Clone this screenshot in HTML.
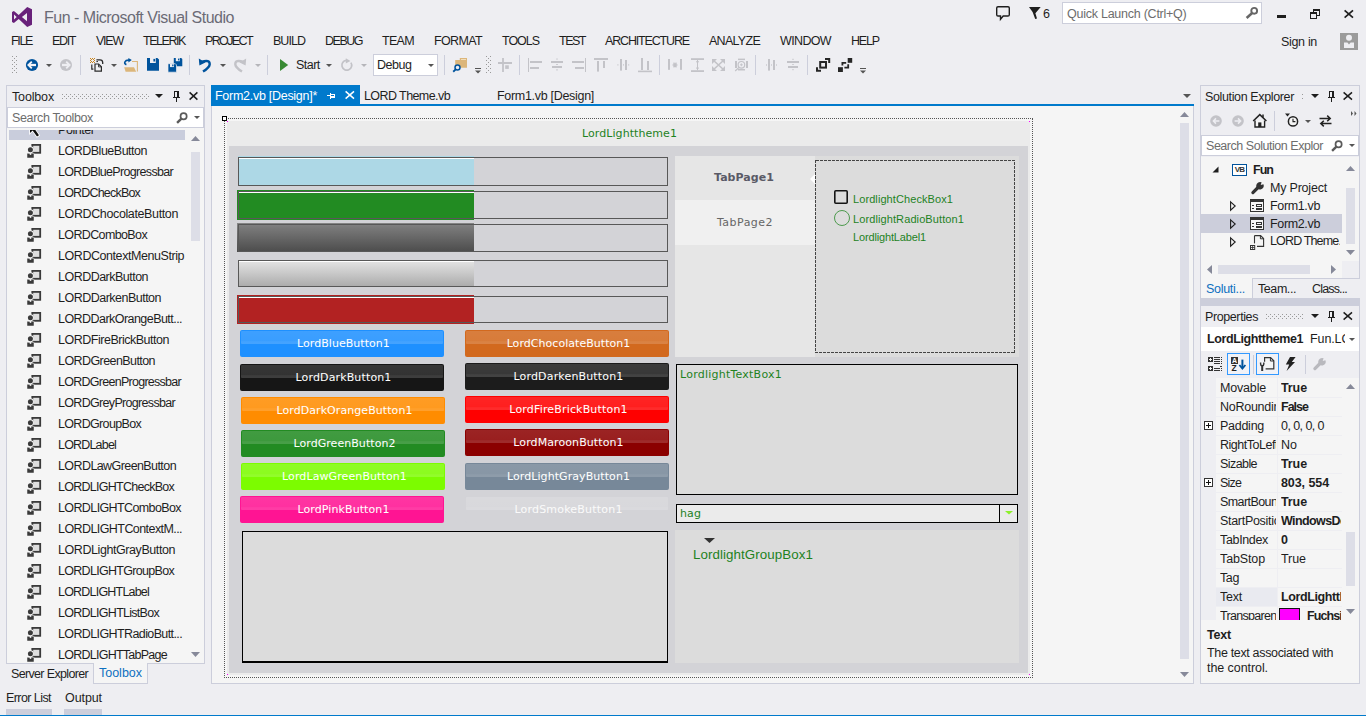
<!DOCTYPE html>
<html><head><meta charset="utf-8"><title>Fun - Microsoft Visual Studio</title>
<style>
*{box-sizing:border-box;margin:0;padding:0}
html,body{width:1366px;height:716px;overflow:hidden;background:#EEEEF2}
body{font-family:"Liberation Sans",sans-serif;font-size:12px;color:#1E1E1E;position:relative}
.a{position:absolute}
.t{position:absolute;white-space:nowrap;line-height:16px;height:16px}
.pn{position:absolute;border:1px solid #CCCEDB;background:#F5F5F5}
svg{position:absolute;overflow:visible}
.vd{font-family:"DejaVu Sans","Liberation Sans",sans-serif}
.btn{position:absolute;width:204px;height:27px;border-radius:2px;color:#fff;font-family:"DejaVu Sans",sans-serif;font-size:11px;text-align:center;line-height:27px;white-space:nowrap;letter-spacing:.1px;padding-left:3px}
.btn i{position:absolute;left:1px;right:1px;top:1px;height:13px;background:linear-gradient(rgba(255,255,255,.14),rgba(255,255,255,.12) 80%,rgba(255,255,255,.17) 81%);border-radius:1px}
</style></head><body>

<!-- title -->
<svg style="left:12px;top:7px" width="20" height="20" viewBox="0 0 20 20"><path fill="#68217A" fill-rule="evenodd" d="M15.2 0 L20 2.3 V17.7 L15.2 20 L6.7 12 L1.9 16 L0 15 V5 L1.9 4 L6.7 8 Z M15 6 V14.2 L9.9 10 Z M2 7.6 V12.5 L4.7 10 Z"/></svg>
<div class="t" style="left:44px;top:10px;font-size:16px;letter-spacing:-0.491px;color:#6b6b76;">Fun - Microsoft Visual Studio</div>
<svg style="left:995px;top:5px" width="16" height="16" viewBox="0 0 16 16"><path fill="none" stroke="#1e1e1e" stroke-width="1.4" d="M3 1.8 H13 Q14.3 1.8 14.3 3.1 V9.7 Q14.3 11 13 11 H8.2 L5.5 14.3 V11 H3 Q1.7 11 1.7 9.7 V3.1 Q1.7 1.8 3 1.8 Z"/></svg>
<svg style="left:1029px;top:7px" width="12" height="12" viewBox="0 0 12 12"><path fill="#1e1e1e" d="M0 0 H11.7 L6.4 6.2 L8 11.6 L6.2 12 L3.6 5 Z"/></svg>
<div class="t" style="left:1043px;top:6px;font-size:12.5px;letter-spacing:-0.452px;">6</div>
<div class="a" style="left:1062px;top:2px;width:200px;height:22px;background:#fff;border:1px solid #CCCEDB"></div>
<div class="t" style="left:1067px;top:6px;font-size:12.5px;letter-spacing:-0.247px;color:#6d6d6d;">Quick Launch (Ctrl+Q)</div>
<svg style="left:1244.6px;top:6px" width="14" height="14" viewBox="0 0 14 14"><circle cx="9.2" cy="4.8" r="2.9" fill="none" stroke="#666" stroke-width="1.9"/><path d="M6.9 7.2 L1.6 12" stroke="#666" stroke-width="2.5"/></svg>
<div class="a" style="left:1277px;top:14.7px;width:9px;height:3.4px;background:#1e1e1e"></div>
<svg style="left:1310px;top:9px" width="10" height="10" shape-rendering="crispEdges"><path fill="#1e1e1e" d="M3 0 H10 V7 H7 V6 H9 V2 H4 V3 H3 Z M0 3 H7 V10 H0 Z"/><path fill="#EEEEF2" d="M1 5 H6 V9 H1 Z"/></svg>
<svg style="left:1344.2px;top:10px" width="9.6" height="8" viewBox="0 0 9.6 8"><path d="M0.6 0.4 L9 7.6 M9 0.4 L0.6 7.6" stroke="#1e1e1e" stroke-width="1.7"/></svg>
<!-- menu -->
<div class="t" style="left:11px;top:33px;font-size:12.5px;letter-spacing:-1.349px;">FILE</div>
<div class="t" style="left:52px;top:33px;font-size:12.5px;letter-spacing:-1.368px;">EDIT</div>
<div class="t" style="left:96px;top:33px;font-size:12.5px;letter-spacing:-1.236px;">VIEW</div>
<div class="t" style="left:143px;top:33px;font-size:12.5px;letter-spacing:-1.443px;">TELERIK</div>
<div class="t" style="left:205px;top:33px;font-size:12.5px;letter-spacing:-1.620px;">PROJECT</div>
<div class="t" style="left:273px;top:33px;font-size:12.5px;letter-spacing:-0.963px;">BUILD</div>
<div class="t" style="left:325px;top:33px;font-size:12.5px;letter-spacing:-1.490px;">DEBUG</div>
<div class="t" style="left:382px;top:33px;font-size:12.5px;letter-spacing:-0.681px;">TEAM</div>
<div class="t" style="left:434px;top:33px;font-size:12.5px;letter-spacing:-0.641px;">FORMAT</div>
<div class="t" style="left:502px;top:33px;font-size:12.5px;letter-spacing:-1.029px;">TOOLS</div>
<div class="t" style="left:559px;top:33px;font-size:12.5px;letter-spacing:-1.487px;">TEST</div>
<div class="t" style="left:605px;top:33px;font-size:12.5px;letter-spacing:-1.160px;">ARCHITECTURE</div>
<div class="t" style="left:709px;top:33px;font-size:12.5px;letter-spacing:-0.720px;">ANALYZE</div>
<div class="t" style="left:780px;top:33px;font-size:12.5px;letter-spacing:-0.641px;">WINDOW</div>
<div class="t" style="left:851px;top:33px;font-size:12.5px;letter-spacing:-1.164px;">HELP</div>
<div class="t" style="left:1281px;top:34px;font-size:12.5px;letter-spacing:-0.317px;">Sign in</div>
<div class="a" style="left:1340px;top:33px;width:18px;height:17px;background:#9B9B9B"></div>
<svg style="left:1340px;top:33px" width="18" height="17" viewBox="0 0 18 17"><circle cx="9" cy="4.8" r="3" fill="#EEEEF2"/><path d="M4 9.4 H7.4 L9 11.6 L10.6 9.4 H14 V15 H4 Z" fill="#EEEEF2"/></svg>
<!-- toolbar -->
<svg style="left:12px;top:56px" width="5" height="17" shape-rendering="crispEdges"><defs><pattern id="g1" width="4" height="4" patternUnits="userSpaceOnUse"><rect x="0" y="0" width="1" height="1" fill="#999"/><rect x="2" y="2" width="1" height="1" fill="#999"/></pattern></defs><rect width="5" height="17" fill="url(#g1)"/></svg>
<svg style="left:26px;top:59px" width="12" height="12" viewBox="0 0 12 12"><circle cx="6" cy="6" r="6.1" fill="#00539C"/><path d="M10 6 H4" stroke="#F4F4F8" stroke-width="2.3" fill="none"/><path d="M5.8 2.6 L2.4 6 L5.8 9.4" stroke="#F4F4F8" stroke-width="1.9" fill="none"/></svg>
<svg style="left:46px;top:64px" width="6" height="3" viewBox="0 0 6 3"><path d="M0 0 H6 L3.0 3 Z" fill="#555"/></svg>
<svg style="left:60px;top:59px" width="12" height="12" viewBox="0 0 12 12"><circle cx="6" cy="6" r="6" fill="#C3C3C8"/><path d="M2 6 H8" stroke="#EEEEF2" stroke-width="2.3" fill="none"/><path d="M6.2 2.6 L9.6 6 L6.2 9.4" stroke="#EEEEF2" stroke-width="1.9" fill="none"/></svg>
<div class="a" style="left:80px;top:55px;width:1px;height:20px;background:#CCCEDB"></div>
<svg style="left:90px;top:58px" width="5" height="5" shape-rendering="crispEdges" fill="#C8841E"><rect x="0" y="0" width="1" height="1"/><rect x="2" y="0" width="1" height="1"/><rect x="4" y="0" width="1" height="1"/><rect x="1" y="1" width="1" height="1"/><rect x="3" y="1" width="1" height="1"/><rect x="0" y="2" width="1" height="1"/><rect x="4" y="2" width="1" height="1"/><rect x="1" y="3" width="1" height="1"/><rect x="3" y="3" width="1" height="1"/><rect x="0" y="4" width="1" height="1"/><rect x="2" y="4" width="1" height="1"/><rect x="4" y="4" width="1" height="1"/></svg>
<svg style="left:89px;top:58px" width="15" height="15" viewBox="0 0 15 15"><path d="M7.4 1.9 H11 Q13.7 1.9 13.7 4.6 V6" fill="none" stroke="#2b2b2b" stroke-width="1.3"/><path d="M7.4 3.6 H9" stroke="#2b2b2b" stroke-width="1"/><path d="M2.8 6.4 V11.2 H4.4" fill="none" stroke="#2b2b2b" stroke-width="1.2"/><path d="M6 6 H9.6 L12.4 8.8 V13.1 H6 Z" fill="#F0F0F2" stroke="#2b2b2b" stroke-width="1.2"/><path d="M9.5 6.2 V8.9 H12.2" fill="none" stroke="#2b2b2b" stroke-width="0.9"/></svg>
<svg style="left:111px;top:64px" width="6" height="3" viewBox="0 0 6 3"><path d="M0 0 H6 L3.0 3 Z" fill="#555"/></svg>
<svg style="left:123px;top:58px" width="16" height="15" viewBox="0 0 16 15"><path d="M9 3.5 H14.4 V13.6" fill="none" stroke="#DCB67A" stroke-width="1.1"/><path d="M1.2 9.2 H11 L13.2 13.7 H2.6 Z" fill="#DCB67A"/><path d="M3.4 6.6 Q1.2 5.8 1.9 4 Q2.8 2 6 2.1" fill="none" stroke="#00539C" stroke-width="1.7"/><path d="M5.4 0 L8.8 2.1 L5.4 4.4 Z" fill="#00539C"/></svg>
<svg style="left:147px;top:58.4px" width="12" height="12.7" viewBox="0 0 12 12.7"><path d="M0 0 H10.4 L12 1.6 V12.7 H0 Z" fill="#00539C"/><rect x="3" y="0" width="5.8" height="5" fill="#EEEEF2"/><rect x="6.4" y="0.9" width="1.8" height="2.6" fill="#00539C"/></svg>
<svg style="left:168px;top:57.8px" width="14.4" height="14.2" viewBox="0 0 14.4 14.2"><path d="M5.8 0 H13.2 L14.3 1.1 V8.2 H5.8 Z" fill="#00539C"/><rect x="7.8" y="0" width="4" height="3.2" fill="#EEEEF2"/><rect x="10" y="0.6" width="1.3" height="1.8" fill="#00539C"/><path d="M0 5.7 H7.3 L8.5 6.9 V14.2 H0 Z" fill="#00539C" stroke="#EEEEF2" stroke-width="0.7"/><rect x="2" y="5.9" width="4" height="3.2" fill="#EEEEF2"/><rect x="4.2" y="6.5" width="1.3" height="1.8" fill="#00539C"/></svg>
<div class="a" style="left:189px;top:55px;width:1px;height:20px;background:#CCCEDB"></div>
<svg style="left:198px;top:58px" width="14" height="15" viewBox="0 0 14 15"><path d="M3.5 4 Q11.9 1.2 11.7 6.4 Q11.5 9.6 5 13.6" fill="none" stroke="#00539C" stroke-width="2.4"/><path d="M0.8 0.4 L1.4 7.4 L7.4 4.4 Z" fill="#00539C"/></svg>
<svg style="left:220px;top:64px" width="6" height="3" viewBox="0 0 6 3"><path d="M0 0 H6 L3.0 3 Z" fill="#555"/></svg>
<svg style="left:232.6px;top:58px" width="14" height="15" viewBox="0 0 14 15"><path d="M10.5 4 Q2.1 1.2 2.3 6.4 Q2.5 9.6 9 13.6" fill="none" stroke="#C3C3C8" stroke-width="2.4"/><path d="M13.2 0.4 L12.6 7.4 L6.6 4.4 Z" fill="#C3C3C8"/></svg>
<svg style="left:255px;top:64px" width="6" height="3" viewBox="0 0 6 3"><path d="M0 0 H6 L3.0 3 Z" fill="#B5B5BA"/></svg>
<div class="a" style="left:267px;top:55px;width:1px;height:20px;background:#CCCEDB"></div>
<svg style="left:280px;top:59px" width="8.2" height="12" viewBox="0 0 8.2 12"><path d="M0 0 L8.2 6 L0 12 Z" fill="#388A34"/></svg>
<div class="t" style="left:296px;top:57px;font-size:12.5px;letter-spacing:-0.520px;">Start</div>
<svg style="left:326px;top:64px" width="6" height="3" viewBox="0 0 6 3"><path d="M0 0 H6 L3.0 3 Z" fill="#555"/></svg>
<svg style="left:340px;top:58px" width="14" height="14" viewBox="0 0 14 14"><path d="M10.9 4.6 A4.9 4.9 0 1 1 6.2 2.4" fill="none" stroke="#C3C3C8" stroke-width="1.7"/><path d="M5.8 0.2 L10.4 2.9 L5.8 5.4 Z" fill="#C3C3C8"/></svg>
<svg style="left:361px;top:64px" width="6" height="3" viewBox="0 0 6 3"><path d="M0 0 H6 L3.0 3 Z" fill="#B5B5BA"/></svg>
<div class="a" style="left:373px;top:54px;width:65px;height:22px;background:#fff;border:1px solid #CCCEDB"></div>
<div class="t" style="left:377px;top:57px;font-size:12.5px;letter-spacing:-0.467px;">Debug</div>
<svg style="left:428px;top:64px" width="6" height="3" viewBox="0 0 6 3"><path d="M0 0 H6 L3.0 3 Z" fill="#555"/></svg>
<div class="a" style="left:444px;top:55px;width:1px;height:20px;background:#CCCEDB"></div>
<svg style="left:452px;top:58px" width="17" height="15" viewBox="0 0 17 15"><path d="M3.2 2 H7.8 V0 H15 V9.8 H3.2 Z" fill="#DCB67A"/><rect x="9" y="1" width="5" height="0.9" fill="#F3E3C4"/><circle cx="5.5" cy="9.6" r="2.5" fill="#EEEEF2" stroke="#00539C" stroke-width="1.5"/><path d="M3.7 11.4 L1.2 13.7" stroke="#00539C" stroke-width="1.9"/></svg>
<svg style="left:475px;top:68px" width="6" height="6" viewBox="0 0 6 6"><path d="M0 0 H6 V1 H0Z M0 2.5 H6 L3 5.5 Z" fill="#555"/></svg>
<svg style="left:486px;top:56px" width="5" height="17" shape-rendering="crispEdges"><defs><pattern id="g2" width="4" height="4" patternUnits="userSpaceOnUse"><rect x="0" y="0" width="1" height="1" fill="#999"/><rect x="2" y="2" width="1" height="1" fill="#999"/></pattern></defs><rect width="5" height="17" fill="url(#g2)"/></svg>
<svg style="left:498px;top:58px" width="14" height="14" viewBox="0 0 14 14"><path d="M0 5 H14 M5 0 V14" stroke="#C3C3C8" stroke-width="1.8"/><rect x="7.2" y="7.3" width="3.6" height="3.6" fill="#C3C3C8"/></svg>
<div class="a" style="left:519px;top:55px;width:1px;height:20px;background:#CCCEDB"></div>
<svg style="left:527px;top:58px" width="16" height="15" fill="#C3C3C8"><rect x="1" y="0" width="1" height="14"/><rect x="3" y="3" width="12" height="2"/><rect x="3" y="9" width="9" height="2"/></svg>
<svg style="left:551px;top:58px" width="16" height="15" fill="#C3C3C8"><rect x="0" y="3" width="12" height="2"/><rect x="1" y="8" width="10" height="2"/><rect x="5.2" y="0.6" width="1.6" height="0.9"/><rect x="5.2" y="6" width="1.6" height="1"/><rect x="5.2" y="11.4" width="1.6" height="1"/></svg>
<svg style="left:572px;top:58px" width="16" height="15" fill="#C3C3C8"><rect x="13" y="0" width="1" height="14"/><rect x="0" y="3" width="12" height="2"/><rect x="3" y="9" width="9" height="2"/></svg>
<svg style="left:593px;top:58px" width="16" height="15" fill="#C3C3C8"><rect x="1" y="0" width="14" height="2"/><rect x="4" y="3" width="2" height="10.6"/><rect x="10" y="3" width="2" height="7"/></svg>
<svg style="left:616px;top:58px" width="16" height="15" fill="#C3C3C8"><rect x="4" y="1" width="2" height="11.6"/><rect x="9" y="2" width="2" height="10"/><rect x="1.4" y="6.3" width="1" height="1.2"/><rect x="7" y="6.3" width="1" height="1.2"/><rect x="12.2" y="6.3" width="1" height="1.2"/></svg>
<svg style="left:637px;top:58px" width="16" height="15" fill="#C3C3C8"><rect x="1" y="12.6" width="14" height="1.6"/><rect x="4" y="0" width="2" height="12"/><rect x="10" y="3" width="2" height="9"/></svg>
<div class="a" style="left:659px;top:55px;width:1px;height:20px;background:#CCCEDB"></div>
<svg style="left:667px;top:58px" width="16" height="15" fill="#C3C3C8"><rect x="1" y="1" width="2" height="10.8"/><rect x="13" y="1" width="2" height="10.8"/><path d="M5.6 7 H10.4 M6.6 4.6 L9.4 9.4 M9.4 4.6 L6.6 9.4" stroke="#C3C3C8" stroke-width="1.3" fill="none"/></svg>
<svg style="left:690px;top:58px" width="16" height="15" fill="#C3C3C8"><rect x="1" y="0.2" width="13" height="1.8"/><rect x="1" y="12.2" width="13" height="1.8"/><rect x="7" y="2" width="1" height="10.2"/><rect x="6.3" y="3" width="2.4" height="1.4"/><rect x="6.3" y="9.4" width="2.4" height="1.4"/></svg>
<svg style="left:711px;top:58px" width="15" height="14" viewBox="0 0 15 14"><path d="M2 2 L13 12 M13 2 L2 12" stroke="#C3C3C8" stroke-width="1.6"/><path d="M1 6 V1 H6 Z M14 6 V1 H9 Z M1 8 V13 H6 Z M14 8 V13 H9 Z" fill="#C3C3C8"/></svg>
<svg style="left:734px;top:58px" width="16" height="15" fill="#C3C3C8"><rect x="4" y="0.6" width="7" height="1.5"/><rect x="4" y="11" width="7" height="1.5"/><rect x="1" y="3" width="2" height="7"/><rect x="12" y="3" width="2" height="7"/><circle cx="7.4" cy="6.8" r="3.3" fill="#EEEEF2" stroke="#C3C3C8" stroke-width="1.2"/><path d="M6 6.8 H8.8 M7.4 5.4 V8.2" stroke="#C3C3C8" stroke-width="0.9"/><path d="M5 9.4 L1.2 13" stroke="#C3C3C8" stroke-width="1.3"/></svg>
<div class="a" style="left:755px;top:55px;width:1px;height:20px;background:#CCCEDB"></div>
<svg style="left:765px;top:58px" width="16" height="15" fill="#C3C3C8"><rect x="3" y="1" width="2" height="11.6"/><rect x="8" y="2" width="2" height="10"/><rect x="1" y="6.4" width="1" height="1.2"/><rect x="6" y="6.4" width="1" height="1.2"/><rect x="11" y="6.4" width="1" height="1.2"/></svg>
<svg style="left:786px;top:58px" width="16" height="15" fill="#C3C3C8"><rect x="1" y="3" width="12" height="2"/><rect x="2" y="8" width="10" height="2"/><rect x="6.3" y="0.8" width="1.4" height="1"/><rect x="6.3" y="6" width="1.4" height="1"/><rect x="6.3" y="11.2" width="1.4" height="1"/></svg>
<div class="a" style="left:807px;top:55px;width:1px;height:20px;background:#CCCEDB"></div>
<svg style="left:816px;top:58px" width="15" height="14" viewBox="0 0 15 14"><rect x="4.2" y="4" width="5.8" height="5.6" fill="#EEEEF2" stroke="#262626" stroke-width="2"/><path d="M9 1 H13.2 V5" fill="none" stroke="#262626" stroke-width="2"/><path d="M1 9.2 V12.8 H5" fill="none" stroke="#262626" stroke-width="2"/></svg>
<svg style="left:838px;top:58px" width="15" height="14" viewBox="0 0 15 14"><rect x="9.7" y="0" width="4.5" height="4.8" fill="#262626"/><rect x="0" y="9.2" width="4.9" height="4.8" fill="#262626"/><path d="M4.4 7.6 V4.8 H8.2" fill="none" stroke="#262626" stroke-width="1.8"/><path d="M10.2 6.2 V9.6 H6.4" fill="none" stroke="#262626" stroke-width="1.8"/></svg>
<svg style="left:860px;top:68px" width="6" height="6" viewBox="0 0 6 6"><path d="M0 0 H6 V1 H0Z M0 2.5 H6 L3 5.5 Z" fill="#555"/></svg>
<!-- toolbox -->
<div class="pn" style="left:6px;top:85px;width:199px;height:579px;background:#EEEEF2"></div><div class="a" style="left:7px;top:128px;width:197px;height:535px;background:#F5F5F5"></div>
<div class="t" style="left:12px;top:89px;font-size:12.5px;letter-spacing:-0.155px;">Toolbox</div>
<svg style="left:62px;top:94px" width="87" height="5" shape-rendering="crispEdges"><defs><pattern id="g3" width="4" height="4" patternUnits="userSpaceOnUse"><rect x="0" y="0" width="1" height="1" fill="#999"/><rect x="2" y="2" width="1" height="1" fill="#999"/></pattern></defs><rect width="87" height="5" fill="url(#g3)"/></svg>
<svg style="left:155px;top:94px" width="8" height="4" viewBox="0 0 8 4"><path d="M0 0 H8 L4.0 4 Z" fill="#1E1E1E"/></svg>
<svg style="left:173px;top:91px" width="7" height="11" shape-rendering="crispEdges"><path fill="#1E1E1E" d="M1 0 H6 V6 H7 V7 H4 V11 H3 V7 H0 V6 H1 Z M2 1 V6 H4 V1 Z"/></svg>
<svg style="left:188.5px;top:92px" width="9" height="8" viewBox="0 0 9 8"><path d="M0.6 0.4 L8.4 7.6 M8.4 0.4 L0.6 7.6" stroke="#1E1E1E" stroke-width="1.5"/></svg>
<div class="a" style="left:7px;top:107px;width:197px;height:21px;background:#fff;border:1px solid #CCCEDB"></div>
<div class="t" style="left:12px;top:110px;font-size:12.5px;letter-spacing:-0.353px;color:#6d6d6d;">Search Toolbox</div>
<svg style="left:176px;top:112px" width="12" height="12" viewBox="0 0 12 12"><circle cx="7.6" cy="4.3" r="3.1" fill="none" stroke="#5a5a5a" stroke-width="1.7"/><path d="M5.4 6.6 L1.1 10.9" stroke="#5a5a5a" stroke-width="2.4"/></svg>
<svg style="left:193.8px;top:116px" width="6" height="3" viewBox="0 0 6 3"><path d="M0 0 H6 L3.0 3 Z" fill="#555"/></svg>
<div class="a" style="left:9px;top:130px;width:176px;height:10px;background:#C9CDDC;overflow:hidden"><div class="t" style="left:49px;top:-8px;font-size:12.5px;letter-spacing:-0.444px">Pointer</div><svg style="left:0;top:0" width="40" height="10" viewBox="0 0 40 10"><path d="M21 -5 V3 L23.6 0.4 L28 6.6 L30 5.2 L25.6 -1 L29 -5 Z" fill="#111" stroke="#fff" stroke-width="1.6" paint-order="stroke"/></svg></div>
<svg style="left:27px;top:144px" width="15" height="14" viewBox="0 0 15 14"><rect x="5.3" y="0.9" width="7.9" height="7.9" fill="#DEDEDE" stroke="#3a3a3a" stroke-width="1.8"/><circle cx="3.4" cy="5.7" r="3.4" fill="#F5F5F5"/><circle cx="3.4" cy="5.7" r="2.5" fill="#3a3a3a"/><path d="M0 14 V9.3 H2.2 L3.5 11 L4.8 9.3 H7 V14 Z" fill="#3a3a3a" stroke="#F5F5F5" stroke-width="0.5"/></svg>
<div class="t" style="left:58px;top:143px;font-size:12.5px;letter-spacing:-0.492px;">LORDBlueButton</div>
<svg style="left:27px;top:165px" width="15" height="14" viewBox="0 0 15 14"><rect x="5.3" y="0.9" width="7.9" height="7.9" fill="#DEDEDE" stroke="#3a3a3a" stroke-width="1.8"/><circle cx="3.4" cy="5.7" r="3.4" fill="#F5F5F5"/><circle cx="3.4" cy="5.7" r="2.5" fill="#3a3a3a"/><path d="M0 14 V9.3 H2.2 L3.5 11 L4.8 9.3 H7 V14 Z" fill="#3a3a3a" stroke="#F5F5F5" stroke-width="0.5"/></svg>
<div class="t" style="left:58px;top:164px;font-size:12.5px;letter-spacing:-0.675px;">LORDBlueProgressbar</div>
<svg style="left:27px;top:186px" width="15" height="14" viewBox="0 0 15 14"><rect x="5.3" y="0.9" width="7.9" height="7.9" fill="#DEDEDE" stroke="#3a3a3a" stroke-width="1.8"/><circle cx="3.4" cy="5.7" r="3.4" fill="#F5F5F5"/><circle cx="3.4" cy="5.7" r="2.5" fill="#3a3a3a"/><path d="M0 14 V9.3 H2.2 L3.5 11 L4.8 9.3 H7 V14 Z" fill="#3a3a3a" stroke="#F5F5F5" stroke-width="0.5"/></svg>
<div class="t" style="left:58px;top:185px;font-size:12.5px;letter-spacing:-0.808px;">LORDCheckBox</div>
<svg style="left:27px;top:207px" width="15" height="14" viewBox="0 0 15 14"><rect x="5.3" y="0.9" width="7.9" height="7.9" fill="#DEDEDE" stroke="#3a3a3a" stroke-width="1.8"/><circle cx="3.4" cy="5.7" r="3.4" fill="#F5F5F5"/><circle cx="3.4" cy="5.7" r="2.5" fill="#3a3a3a"/><path d="M0 14 V9.3 H2.2 L3.5 11 L4.8 9.3 H7 V14 Z" fill="#3a3a3a" stroke="#F5F5F5" stroke-width="0.5"/></svg>
<div class="t" style="left:58px;top:206px;font-size:12.5px;letter-spacing:-0.377px;">LORDChocolateButton</div>
<svg style="left:27px;top:228px" width="15" height="14" viewBox="0 0 15 14"><rect x="5.3" y="0.9" width="7.9" height="7.9" fill="#DEDEDE" stroke="#3a3a3a" stroke-width="1.8"/><circle cx="3.4" cy="5.7" r="3.4" fill="#F5F5F5"/><circle cx="3.4" cy="5.7" r="2.5" fill="#3a3a3a"/><path d="M0 14 V9.3 H2.2 L3.5 11 L4.8 9.3 H7 V14 Z" fill="#3a3a3a" stroke="#F5F5F5" stroke-width="0.5"/></svg>
<div class="t" style="left:58px;top:227px;font-size:12.5px;letter-spacing:-0.630px;">LORDComboBox</div>
<svg style="left:27px;top:249px" width="15" height="14" viewBox="0 0 15 14"><rect x="5.3" y="0.9" width="7.9" height="7.9" fill="#DEDEDE" stroke="#3a3a3a" stroke-width="1.8"/><circle cx="3.4" cy="5.7" r="3.4" fill="#F5F5F5"/><circle cx="3.4" cy="5.7" r="2.5" fill="#3a3a3a"/><path d="M0 14 V9.3 H2.2 L3.5 11 L4.8 9.3 H7 V14 Z" fill="#3a3a3a" stroke="#F5F5F5" stroke-width="0.5"/></svg>
<div class="t" style="left:58px;top:248px;font-size:12.5px;letter-spacing:-0.439px;">LORDContextMenuStrip</div>
<svg style="left:27px;top:270px" width="15" height="14" viewBox="0 0 15 14"><rect x="5.3" y="0.9" width="7.9" height="7.9" fill="#DEDEDE" stroke="#3a3a3a" stroke-width="1.8"/><circle cx="3.4" cy="5.7" r="3.4" fill="#F5F5F5"/><circle cx="3.4" cy="5.7" r="2.5" fill="#3a3a3a"/><path d="M0 14 V9.3 H2.2 L3.5 11 L4.8 9.3 H7 V14 Z" fill="#3a3a3a" stroke="#F5F5F5" stroke-width="0.5"/></svg>
<div class="t" style="left:58px;top:269px;font-size:12.5px;letter-spacing:-0.519px;">LORDDarkButton</div>
<svg style="left:27px;top:291px" width="15" height="14" viewBox="0 0 15 14"><rect x="5.3" y="0.9" width="7.9" height="7.9" fill="#DEDEDE" stroke="#3a3a3a" stroke-width="1.8"/><circle cx="3.4" cy="5.7" r="3.4" fill="#F5F5F5"/><circle cx="3.4" cy="5.7" r="2.5" fill="#3a3a3a"/><path d="M0 14 V9.3 H2.2 L3.5 11 L4.8 9.3 H7 V14 Z" fill="#3a3a3a" stroke="#F5F5F5" stroke-width="0.5"/></svg>
<div class="t" style="left:58px;top:290px;font-size:12.5px;letter-spacing:-0.510px;">LORDDarkenButton</div>
<svg style="left:27px;top:312px" width="15" height="14" viewBox="0 0 15 14"><rect x="5.3" y="0.9" width="7.9" height="7.9" fill="#DEDEDE" stroke="#3a3a3a" stroke-width="1.8"/><circle cx="3.4" cy="5.7" r="3.4" fill="#F5F5F5"/><circle cx="3.4" cy="5.7" r="2.5" fill="#3a3a3a"/><path d="M0 14 V9.3 H2.2 L3.5 11 L4.8 9.3 H7 V14 Z" fill="#3a3a3a" stroke="#F5F5F5" stroke-width="0.5"/></svg>
<div class="t" style="left:58px;top:311px;font-size:12.5px;letter-spacing:-0.546px;">LORDDarkOrangeButt...</div>
<svg style="left:27px;top:333px" width="15" height="14" viewBox="0 0 15 14"><rect x="5.3" y="0.9" width="7.9" height="7.9" fill="#DEDEDE" stroke="#3a3a3a" stroke-width="1.8"/><circle cx="3.4" cy="5.7" r="3.4" fill="#F5F5F5"/><circle cx="3.4" cy="5.7" r="2.5" fill="#3a3a3a"/><path d="M0 14 V9.3 H2.2 L3.5 11 L4.8 9.3 H7 V14 Z" fill="#3a3a3a" stroke="#F5F5F5" stroke-width="0.5"/></svg>
<div class="t" style="left:58px;top:332px;font-size:12.5px;letter-spacing:-0.483px;">LORDFireBrickButton</div>
<svg style="left:27px;top:354px" width="15" height="14" viewBox="0 0 15 14"><rect x="5.3" y="0.9" width="7.9" height="7.9" fill="#DEDEDE" stroke="#3a3a3a" stroke-width="1.8"/><circle cx="3.4" cy="5.7" r="3.4" fill="#F5F5F5"/><circle cx="3.4" cy="5.7" r="2.5" fill="#3a3a3a"/><path d="M0 14 V9.3 H2.2 L3.5 11 L4.8 9.3 H7 V14 Z" fill="#3a3a3a" stroke="#F5F5F5" stroke-width="0.5"/></svg>
<div class="t" style="left:58px;top:353px;font-size:12.5px;letter-spacing:-0.574px;">LORDGreenButton</div>
<svg style="left:27px;top:375px" width="15" height="14" viewBox="0 0 15 14"><rect x="5.3" y="0.9" width="7.9" height="7.9" fill="#DEDEDE" stroke="#3a3a3a" stroke-width="1.8"/><circle cx="3.4" cy="5.7" r="3.4" fill="#F5F5F5"/><circle cx="3.4" cy="5.7" r="2.5" fill="#3a3a3a"/><path d="M0 14 V9.3 H2.2 L3.5 11 L4.8 9.3 H7 V14 Z" fill="#3a3a3a" stroke="#F5F5F5" stroke-width="0.5"/></svg>
<div class="t" style="left:58px;top:374px;font-size:12.5px;letter-spacing:-0.728px;">LORDGreenProgressbar</div>
<svg style="left:27px;top:396px" width="15" height="14" viewBox="0 0 15 14"><rect x="5.3" y="0.9" width="7.9" height="7.9" fill="#DEDEDE" stroke="#3a3a3a" stroke-width="1.8"/><circle cx="3.4" cy="5.7" r="3.4" fill="#F5F5F5"/><circle cx="3.4" cy="5.7" r="2.5" fill="#3a3a3a"/><path d="M0 14 V9.3 H2.2 L3.5 11 L4.8 9.3 H7 V14 Z" fill="#3a3a3a" stroke="#F5F5F5" stroke-width="0.5"/></svg>
<div class="t" style="left:58px;top:395px;font-size:12.5px;letter-spacing:-0.679px;">LORDGreyProgressbar</div>
<svg style="left:27px;top:417px" width="15" height="14" viewBox="0 0 15 14"><rect x="5.3" y="0.9" width="7.9" height="7.9" fill="#DEDEDE" stroke="#3a3a3a" stroke-width="1.8"/><circle cx="3.4" cy="5.7" r="3.4" fill="#F5F5F5"/><circle cx="3.4" cy="5.7" r="2.5" fill="#3a3a3a"/><path d="M0 14 V9.3 H2.2 L3.5 11 L4.8 9.3 H7 V14 Z" fill="#3a3a3a" stroke="#F5F5F5" stroke-width="0.5"/></svg>
<div class="t" style="left:58px;top:416px;font-size:12.5px;letter-spacing:-0.667px;">LORDGroupBox</div>
<svg style="left:27px;top:438px" width="15" height="14" viewBox="0 0 15 14"><rect x="5.3" y="0.9" width="7.9" height="7.9" fill="#DEDEDE" stroke="#3a3a3a" stroke-width="1.8"/><circle cx="3.4" cy="5.7" r="3.4" fill="#F5F5F5"/><circle cx="3.4" cy="5.7" r="2.5" fill="#3a3a3a"/><path d="M0 14 V9.3 H2.2 L3.5 11 L4.8 9.3 H7 V14 Z" fill="#3a3a3a" stroke="#F5F5F5" stroke-width="0.5"/></svg>
<div class="t" style="left:58px;top:437px;font-size:12.5px;letter-spacing:-0.813px;">LORDLabel</div>
<svg style="left:27px;top:459px" width="15" height="14" viewBox="0 0 15 14"><rect x="5.3" y="0.9" width="7.9" height="7.9" fill="#DEDEDE" stroke="#3a3a3a" stroke-width="1.8"/><circle cx="3.4" cy="5.7" r="3.4" fill="#F5F5F5"/><circle cx="3.4" cy="5.7" r="2.5" fill="#3a3a3a"/><path d="M0 14 V9.3 H2.2 L3.5 11 L4.8 9.3 H7 V14 Z" fill="#3a3a3a" stroke="#F5F5F5" stroke-width="0.5"/></svg>
<div class="t" style="left:58px;top:458px;font-size:12.5px;letter-spacing:-0.586px;">LORDLawGreenButton</div>
<svg style="left:27px;top:480px" width="15" height="14" viewBox="0 0 15 14"><rect x="5.3" y="0.9" width="7.9" height="7.9" fill="#DEDEDE" stroke="#3a3a3a" stroke-width="1.8"/><circle cx="3.4" cy="5.7" r="3.4" fill="#F5F5F5"/><circle cx="3.4" cy="5.7" r="2.5" fill="#3a3a3a"/><path d="M0 14 V9.3 H2.2 L3.5 11 L4.8 9.3 H7 V14 Z" fill="#3a3a3a" stroke="#F5F5F5" stroke-width="0.5"/></svg>
<div class="t" style="left:58px;top:479px;font-size:12.5px;letter-spacing:-0.736px;">LORDLIGHTCheckBox</div>
<svg style="left:27px;top:501px" width="15" height="14" viewBox="0 0 15 14"><rect x="5.3" y="0.9" width="7.9" height="7.9" fill="#DEDEDE" stroke="#3a3a3a" stroke-width="1.8"/><circle cx="3.4" cy="5.7" r="3.4" fill="#F5F5F5"/><circle cx="3.4" cy="5.7" r="2.5" fill="#3a3a3a"/><path d="M0 14 V9.3 H2.2 L3.5 11 L4.8 9.3 H7 V14 Z" fill="#3a3a3a" stroke="#F5F5F5" stroke-width="0.5"/></svg>
<div class="t" style="left:58px;top:500px;font-size:12.5px;letter-spacing:-0.610px;">LORDLIGHTComboBox</div>
<svg style="left:27px;top:522px" width="15" height="14" viewBox="0 0 15 14"><rect x="5.3" y="0.9" width="7.9" height="7.9" fill="#DEDEDE" stroke="#3a3a3a" stroke-width="1.8"/><circle cx="3.4" cy="5.7" r="3.4" fill="#F5F5F5"/><circle cx="3.4" cy="5.7" r="2.5" fill="#3a3a3a"/><path d="M0 14 V9.3 H2.2 L3.5 11 L4.8 9.3 H7 V14 Z" fill="#3a3a3a" stroke="#F5F5F5" stroke-width="0.5"/></svg>
<div class="t" style="left:58px;top:521px;font-size:12.5px;letter-spacing:-0.572px;">LORDLIGHTContextM...</div>
<svg style="left:27px;top:543px" width="15" height="14" viewBox="0 0 15 14"><rect x="5.3" y="0.9" width="7.9" height="7.9" fill="#DEDEDE" stroke="#3a3a3a" stroke-width="1.8"/><circle cx="3.4" cy="5.7" r="3.4" fill="#F5F5F5"/><circle cx="3.4" cy="5.7" r="2.5" fill="#3a3a3a"/><path d="M0 14 V9.3 H2.2 L3.5 11 L4.8 9.3 H7 V14 Z" fill="#3a3a3a" stroke="#F5F5F5" stroke-width="0.5"/></svg>
<div class="t" style="left:58px;top:542px;font-size:12.5px;letter-spacing:-0.424px;">LORDLightGrayButton</div>
<svg style="left:27px;top:564px" width="15" height="14" viewBox="0 0 15 14"><rect x="5.3" y="0.9" width="7.9" height="7.9" fill="#DEDEDE" stroke="#3a3a3a" stroke-width="1.8"/><circle cx="3.4" cy="5.7" r="3.4" fill="#F5F5F5"/><circle cx="3.4" cy="5.7" r="2.5" fill="#3a3a3a"/><path d="M0 14 V9.3 H2.2 L3.5 11 L4.8 9.3 H7 V14 Z" fill="#3a3a3a" stroke="#F5F5F5" stroke-width="0.5"/></svg>
<div class="t" style="left:58px;top:563px;font-size:12.5px;letter-spacing:-0.695px;">LORDLIGHTGroupBox</div>
<svg style="left:27px;top:585px" width="15" height="14" viewBox="0 0 15 14"><rect x="5.3" y="0.9" width="7.9" height="7.9" fill="#DEDEDE" stroke="#3a3a3a" stroke-width="1.8"/><circle cx="3.4" cy="5.7" r="3.4" fill="#F5F5F5"/><circle cx="3.4" cy="5.7" r="2.5" fill="#3a3a3a"/><path d="M0 14 V9.3 H2.2 L3.5 11 L4.8 9.3 H7 V14 Z" fill="#3a3a3a" stroke="#F5F5F5" stroke-width="0.5"/></svg>
<div class="t" style="left:58px;top:584px;font-size:12.5px;letter-spacing:-0.795px;">LORDLIGHTLabel</div>
<svg style="left:27px;top:606px" width="15" height="14" viewBox="0 0 15 14"><rect x="5.3" y="0.9" width="7.9" height="7.9" fill="#DEDEDE" stroke="#3a3a3a" stroke-width="1.8"/><circle cx="3.4" cy="5.7" r="3.4" fill="#F5F5F5"/><circle cx="3.4" cy="5.7" r="2.5" fill="#3a3a3a"/><path d="M0 14 V9.3 H2.2 L3.5 11 L4.8 9.3 H7 V14 Z" fill="#3a3a3a" stroke="#F5F5F5" stroke-width="0.5"/></svg>
<div class="t" style="left:58px;top:605px;font-size:12.5px;letter-spacing:-0.721px;">LORDLIGHTListBox</div>
<svg style="left:27px;top:627px" width="15" height="14" viewBox="0 0 15 14"><rect x="5.3" y="0.9" width="7.9" height="7.9" fill="#DEDEDE" stroke="#3a3a3a" stroke-width="1.8"/><circle cx="3.4" cy="5.7" r="3.4" fill="#F5F5F5"/><circle cx="3.4" cy="5.7" r="2.5" fill="#3a3a3a"/><path d="M0 14 V9.3 H2.2 L3.5 11 L4.8 9.3 H7 V14 Z" fill="#3a3a3a" stroke="#F5F5F5" stroke-width="0.5"/></svg>
<div class="t" style="left:58px;top:626px;font-size:12.5px;letter-spacing:-0.612px;">LORDLIGHTRadioButt...</div>
<svg style="left:27px;top:648px" width="15" height="14" viewBox="0 0 15 14"><rect x="5.3" y="0.9" width="7.9" height="7.9" fill="#DEDEDE" stroke="#3a3a3a" stroke-width="1.8"/><circle cx="3.4" cy="5.7" r="3.4" fill="#F5F5F5"/><circle cx="3.4" cy="5.7" r="2.5" fill="#3a3a3a"/><path d="M0 14 V9.3 H2.2 L3.5 11 L4.8 9.3 H7 V14 Z" fill="#3a3a3a" stroke="#F5F5F5" stroke-width="0.5"/></svg>
<div class="t" style="left:58px;top:647px;font-size:12.5px;letter-spacing:-0.743px;">LORDLIGHTTabPage</div>
<div class="a" style="left:187px;top:129px;width:17px;height:534px;background:#F5F5F5"></div>
<svg style="left:191px;top:136px" width="9" height="5" viewBox="0 0 9 5"><path d="M0 5 H9 L4.5 0 Z" fill="#868999"/></svg>
<div class="a" style="left:191px;top:152px;width:9px;height:89px;background:#DDDEE7"></div>
<svg style="left:191px;top:652px" width="9" height="5" viewBox="0 0 9 5"><path d="M0 0 H9 L4.5 5 Z" fill="#868999"/></svg>
<div class="t" style="left:11px;top:666px;font-size:12.5px;letter-spacing:-0.656px;">Server Explorer</div>
<div class="a" style="left:93px;top:663px;width:55px;height:21px;background:#F5F5F5;border:1px solid #CCCEDB;border-top:none"></div>
<div class="t" style="left:99px;top:665px;font-size:12.5px;letter-spacing:-0.012px;color:#0E70C0;">Toolbox</div>
<!-- document -->
<div class="a" style="left:211px;top:85px;width:149px;height:20px;background:#007ACC"></div>
<div class="t" style="left:215px;top:88px;font-size:12.5px;letter-spacing:-0.277px;color:#fff;">Form2.vb [Design]*</div>
<svg style="left:327px;top:93px" width="8" height="6" shape-rendering="crispEdges"><path fill="#fff" d="M0 2 H3 V3 H0Z M3 0 H4 V6 H3Z M4 1 H8 V5 H4Z"/><path fill="#007ACC" d="M4 2 H7 V3 H4Z"/></svg>
<svg style="left:345px;top:91px" width="9.6" height="8" viewBox="0 0 9.6 8"><path d="M0.6 0.4 L9.0 7.6 M9.0 0.4 L0.6 7.6" stroke="#fff" stroke-width="1.5"/></svg>
<div class="t" style="left:364px;top:88px;font-size:12.5px;letter-spacing:-0.581px;">LORD Theme.vb</div>
<div class="t" style="left:497px;top:88px;font-size:12.5px;letter-spacing:-0.301px;">Form1.vb [Design]</div>
<svg style="left:1183px;top:94px" width="8" height="4" viewBox="0 0 8 4"><path d="M0 0 H8 L4.0 4 Z" fill="#555"/></svg>
<div class="a" style="left:211px;top:104px;width:983px;height:2px;background:#007ACC"></div>
<div class="a" style="left:211px;top:106px;width:983px;height:578px;background:#F5F5F5;border:1px solid #CCCEDB;border-top:none"></div>
<svg style="left:1180px;top:112px" width="9" height="5" viewBox="0 0 9 5"><path d="M0 5 H9 L4.5 0 Z" fill="#868999"/></svg>
<div class="a" style="left:1180px;top:123px;width:9px;height:536px;background:#DDDEE7"></div>
<svg style="left:1180px;top:672px" width="9" height="5" viewBox="0 0 9 5"><path d="M0 0 H9 L4.5 5 Z" fill="#868999"/></svg>
<div class="a" style="left:224px;top:118px;width:809px;height:560px;border:1px dotted #555"></div>
<div class="a" style="left:222px;top:116px;width:5px;height:5px;background:#fff;border:1px solid #000"></div>
<div class="a" style="left:227px;top:121px;width:803px;height:554px;background:#EBEBEB"></div>
<div class="a" style="left:229px;top:146px;width:799px;height:527px;background:#D3D3D7"></div>
<div class="a" style="left:227px;top:121px;width:1px;height:1px;background:#FF00FF"></div>
<div class="a" style="left:1029px;top:121px;width:1px;height:1px;background:#FF00FF"></div>
<div class="a" style="left:227px;top:674px;width:1px;height:1px;background:#FF00FF"></div>
<div class="a" style="left:1029px;top:674px;width:1px;height:1px;background:#FF00FF"></div>
<div class="t vd" style="left:582px;top:126px;font-size:11px;letter-spacing:0.069px;color:#1E821E;">LordLighttheme1</div>
<div class="a" style="left:238px;top:156px;width:236px;height:30px;background:#ADD8E6"></div>
<div class="a" style="left:239px;top:158px;width:235px;height:1px;background:#fff"></div>
<div class="a" style="left:238px;top:157px;width:430px;height:29px;border:1px solid #585858"></div>
<div class="a" style="left:237px;top:190px;width:237px;height:30px;background:#228B22"></div>
<div class="a" style="left:239px;top:192px;width:235px;height:1px;background:#fff"></div>
<div class="a" style="left:238px;top:191px;width:430px;height:28px;border:1px solid #585858"></div>
<div class="a" style="left:237px;top:223px;width:237px;height:29px;background:linear-gradient(#858585,#7a7a7a 15%,#4c4c4c)"></div>
<div class="a" style="left:238px;top:224px;width:430px;height:28px;border:1px solid #585858"></div>
<div class="a" style="left:238px;top:260px;width:236px;height:27px;background:linear-gradient(#e6e6e6,#aaaaaa)"></div>
<div class="a" style="left:239px;top:261px;width:235px;height:1px;background:#fff"></div>
<div class="a" style="left:238px;top:260px;width:430px;height:27px;border:1px solid #585858"></div>
<div class="a" style="left:237px;top:295px;width:237px;height:29px;background:#B22222"></div>
<div class="a" style="left:239px;top:297px;width:235px;height:1px;background:#fff"></div>
<div class="a" style="left:238px;top:296px;width:430px;height:27px;border:1px solid #585858"></div>
<div class="btn" style="left:240px;top:330px;background:#1E90FF;color:#fff;letter-spacing:0.042px"><i></i><span style="position:relative">LordBlueButton1</span></div>
<div class="btn" style="left:240px;top:364px;background:#161616;color:#fff;letter-spacing:0.138px"><i></i><span style="position:relative">LordDarkButton1</span></div>
<div class="btn" style="left:241px;top:397px;background:#FF8C00;color:#fff;letter-spacing:0.068px"><i></i><span style="position:relative">LordDarkOrangeButton1</span></div>
<div class="btn" style="left:241px;top:430px;background:#228B22;color:#fff;letter-spacing:0.054px"><i></i><span style="position:relative">LordGreenButton2</span></div>
<div class="btn" style="left:241px;top:463px;background:#7CFC00;color:#fff;letter-spacing:0.095px"><i></i><span style="position:relative">LordLawGreenButton1</span></div>
<div class="btn" style="left:240px;top:496px;background:#FF1493;color:#fff;letter-spacing:0.093px"><i></i><span style="position:relative">LordPinkButton1</span></div>
<div class="btn" style="left:465px;top:330px;background:#D2691E;color:#fff;letter-spacing:0.042px"><i></i><span style="position:relative">LordChocolateButton1</span></div>
<div class="btn" style="left:465px;top:363px;background:#1C1C1C;color:#fff;letter-spacing:0.160px"><i></i><span style="position:relative">LordDarkenButton1</span></div>
<div class="btn" style="left:465px;top:396px;background:#FF0000;color:#fff;letter-spacing:0.170px"><i></i><span style="position:relative">LordFireBrickButton1</span></div>
<div class="btn" style="left:465px;top:429px;background:#8B0000;color:#fff;letter-spacing:0.090px"><i></i><span style="position:relative">LordMaroonButton1</span></div>
<div class="btn" style="left:465px;top:463px;background:#778899;color:#fff;letter-spacing:0.072px"><i></i><span style="position:relative">LordLightGrayButton1</span></div>
<div class="btn" style="left:465px;top:496px;background:#D3D3D7;color:#FAFAFA;letter-spacing:0.200px"><i></i><span style="position:relative">LordSmokeButton1</span></div>
<div class="a" style="left:242px;top:531px;width:426px;height:132px;background:#DCDCDC;border:1px solid #000;border-bottom-width:2px"></div>
<div class="a" style="left:675px;top:156px;width:344px;height:201px;background:#E6E6E6"></div>
<div class="a" style="left:675px;top:200px;width:140px;height:45px;background:#F0F0F0"></div>
<div class="a" style="left:815px;top:156px;width:204px;height:201px;background:#DCDCDC"></div>
<svg style="left:815px;top:160px" width="200" height="193" shape-rendering="crispEdges"><rect x="0.5" y="0.5" width="199" height="192" fill="none" stroke="#444" stroke-width="1" stroke-dasharray="3 1"/></svg>
<svg style="left:810px;top:174px" width="5" height="10" viewBox="0 0 5 10"><path d="M5 0 L0 5 L5 10 Z" fill="#fff"/></svg>
<div class="t vd" style="left:714px;top:170px;font-size:11px;letter-spacing:0.055px;font-weight:bold;color:#5a5a66;">TabPage1</div>
<div class="t vd" style="left:717px;top:215px;font-size:11px;letter-spacing:0.469px;color:#666;">TabPage2</div>
<svg style="left:834px;top:190px" width="14" height="14"><rect x="0.8" y="0.8" width="12.4" height="12.4" rx="1" fill="none" stroke="#141414" stroke-width="1.6"/></svg>
<div class="a" style="left:834px;top:210px;width:16px;height:16px;border:1px solid #4d9a4d;border-radius:50%"></div>
<div class="t" style="left:853px;top:190.5px;font-size:11px;letter-spacing:0.086px;color:#1E821E;">LordlightCheckBox1</div>
<div class="t" style="left:853px;top:210.5px;font-size:11px;letter-spacing:0.102px;color:#1E821E;">LordlightRadioButton1</div>
<div class="t" style="left:853px;top:228.5px;font-size:11px;letter-spacing:-0.149px;color:#1E821E;">LordlightLabel1</div>
<div class="a" style="left:676px;top:364px;width:342px;height:131px;background:#DCDCDC;border:1px solid #000"></div>
<div class="t vd" style="left:680px;top:367px;font-size:11px;letter-spacing:0.232px;color:#1E821E;">LordlightTextBox1</div>
<div class="a" style="left:676px;top:504px;width:342px;height:19px;background:#EBEBEB;border:1px solid #000"></div>
<div class="a" style="left:999px;top:504px;width:1px;height:19px;background:#000"></div>
<svg style="left:1005px;top:511px" width="8" height="4" viewBox="0 0 8 4"><path d="M0 0 H8 L4 3.6 Z" fill="#8CF02A"/></svg>
<div class="t vd" style="left:680px;top:506px;font-size:11px;letter-spacing:0.102px;color:#1E821E;">hag</div>
<div class="a" style="left:675px;top:530px;width:344px;height:133px;background:#DCDCDC"></div>
<svg style="left:704px;top:538px" width="11" height="5" viewBox="0 0 11 5"><path d="M0 0 H11 L5.5 5 Z" fill="#333"/></svg>
<div class="t" style="left:693px;top:547px;font-size:13.33px;letter-spacing:0.080px;color:#1E821E;">LordlightGroupBox1</div>
<!-- solution explorer -->
<div class="pn" style="left:1200px;top:85px;width:160px;height:194px;background:#EEEEF2"></div>
<div class="t" style="left:1205px;top:89px;font-size:12.5px;letter-spacing:-0.364px;">Solution Explorer</div>
<svg style="left:1302px;top:94px" width="1" height="5" shape-rendering="crispEdges"><defs><pattern id="g4" width="4" height="4" patternUnits="userSpaceOnUse"><rect x="0" y="0" width="1" height="1" fill="#999"/><rect x="2" y="2" width="1" height="1" fill="#999"/></pattern></defs><rect width="1" height="5" fill="url(#g4)"/></svg>
<svg style="left:1311px;top:94px" width="8" height="4" viewBox="0 0 8 4"><path d="M0 0 H8 L4.0 4 Z" fill="#1E1E1E"/></svg>
<svg style="left:1328px;top:91px" width="7" height="11" shape-rendering="crispEdges"><path fill="#1E1E1E" d="M1 0 H6 V6 H7 V7 H4 V11 H3 V7 H0 V6 H1 Z M2 1 V6 H4 V1 Z"/></svg>
<svg style="left:1343.2px;top:92px" width="9.6" height="8" viewBox="0 0 9.6 8"><path d="M0.6 0.4 L9.0 7.6 M9.0 0.4 L0.6 7.6" stroke="#1E1E1E" stroke-width="1.5"/></svg>
<svg style="left:1210px;top:115px" width="12" height="12" viewBox="0 0 12 12"><circle cx="6" cy="6" r="5.8" fill="#C3C3C8"/><path d="M9.4 6 H3.6 M6 3.4 L3.4 6 L6 8.6" stroke="#EEEEF2" stroke-width="1.5" fill="none"/></svg>
<svg style="left:1232px;top:115px" width="12" height="12" viewBox="0 0 12 12"><circle cx="6" cy="6" r="5.8" fill="#C3C3C8"/><path d="M2.6 6 H8.4 M6 3.4 L8.6 6 L6 8.6" stroke="#EEEEF2" stroke-width="1.5" fill="none"/></svg>
<svg style="left:1252px;top:113px" width="16" height="15" viewBox="0 0 16 15"><path d="M1.2 8 L7.8 1.6 L14.4 8" fill="none" stroke="#222" stroke-width="1.5"/><path d="M3 7.4 V14 H12.6 V7.4" fill="#F5F5F5" stroke="#222" stroke-width="1.4"/><rect x="6.2" y="9.4" width="3.2" height="4.6" fill="#222"/><path d="M11 1.6 V4.6" stroke="#222" stroke-width="1.5"/></svg>
<div class="a" style="left:1274px;top:111px;width:1px;height:20px;background:#CCCEDB"></div>
<svg style="left:1285px;top:113px" width="14" height="14" viewBox="0 0 14 14"><circle cx="8" cy="8.4" r="4.6" fill="#F5F5F5" stroke="#222" stroke-width="1.5"/><path d="M8 5.8 V8.6 H10.4" stroke="#222" stroke-width="1.1" fill="none"/><path d="M0 0.4 H5 L2.5 3.4 Z" fill="#222"/></svg>
<svg style="left:1305px;top:120px" width="6" height="3" viewBox="0 0 6 3"><path d="M0 0 H6 L3.0 3 Z" fill="#555"/></svg>
<svg style="left:1319px;top:115px" width="13" height="12" viewBox="0 0 13 12"><path d="M0.5 3.4 H11 M8.2 0.6 L11.2 3.4 L8.2 6.2" stroke="#222" stroke-width="1.5" fill="none"/><path d="M12.5 8.6 H2 M4.8 5.8 L1.8 8.6 L4.8 11.4" stroke="#222" stroke-width="1.5" fill="none"/></svg>
<svg style="left:1351px;top:111px" width="6" height="5" viewBox="0 0 6 5"><path d="M0 0 L2 2.5 L0 5 Z M3.5 0 L5.5 2.5 L3.5 5 Z" fill="#555"/></svg>
<div class="a" style="left:1201px;top:135px;width:158px;height:21px;background:#fff;border:1px solid #CCCEDB"></div>
<div class="t" style="left:1206px;top:138px;font-size:12.5px;letter-spacing:-0.462px;color:#6d6d6d;">Search Solution Explor</div>
<svg style="left:1331px;top:140px" width="12" height="12" viewBox="0 0 12 12"><circle cx="7.6" cy="4.3" r="3.1" fill="none" stroke="#5a5a5a" stroke-width="1.7"/><path d="M5.4 6.6 L1.1 10.9" stroke="#5a5a5a" stroke-width="2.4"/></svg>
<svg style="left:1349px;top:144px" width="6" height="3" viewBox="0 0 6 3"><path d="M0 0 H6 L3.0 3 Z" fill="#555"/></svg>
<div class="a" style="left:1201px;top:157px;width:158px;height:121px;background:#F5F5F5"></div>
<div class="a" style="left:1201px;top:214px;width:141px;height:19px;background:#CCCEDB"></div>
<svg style="left:1212px;top:166px" width="7" height="7" viewBox="0 0 7 7"><path d="M6.5 0.5 V6.5 H0.5 Z" fill="#1E1E1E"/></svg>
<div class="a" style="left:1232px;top:164px;width:15px;height:12px;border:1px solid #00539C;background:#fff;font-size:8px;line-height:10px;text-align:center;letter-spacing:-.8px;color:#333;font-weight:bold">VB</div>
<div class="t" style="left:1253px;top:162px;font-size:12.5px;letter-spacing:-0.969px;font-weight:bold;">Fun</div>
<svg style="left:1251px;top:182px" width="13" height="12" viewBox="0 0 13 12"><path d="M1.9 10.6 L7 5.5" stroke="#333" stroke-width="3.2" stroke-linecap="round"/><path d="M12.44 2.19 A3.8 3.8 0 1 1 10.6 0.36 L9.7 3.1 Z" fill="#333"/></svg>
<div class="t" style="left:1270px;top:180px;font-size:12.5px;letter-spacing:-0.204px;">My Project</div>
<svg style="left:1230px;top:201px" width="6" height="10" viewBox="0 0 6 10"><path d="M0.6 0.8 L5.2 5 L0.6 9.2 Z" fill="none" stroke="#1E1E1E" stroke-width="1.1"/></svg>
<svg style="left:1230px;top:219px" width="6" height="10" viewBox="0 0 6 10"><path d="M0.6 0.8 L5.2 5 L0.6 9.2 Z" fill="none" stroke="#1E1E1E" stroke-width="1.1"/></svg>
<svg style="left:1230px;top:237px" width="6" height="10" viewBox="0 0 6 10"><path d="M0.6 0.8 L5.2 5 L0.6 9.2 Z" fill="none" stroke="#1E1E1E" stroke-width="1.1"/></svg>
<svg style="left:1250px;top:199px" width="14" height="13" shape-rendering="crispEdges"><rect x="0" y="0" width="14" height="13" fill="#333"/><rect x="1" y="3" width="12" height="9" fill="#F5F5F5"/><path fill="#333" d="M2 6 H4 V7 H2Z M2 9 H4 V10 H2Z M6 5 H12 V8 H6Z M6 9 H12 V11 H6Z"/><path fill="#F5F5F5" d="M7 6 H11 V7 H7Z M7 9.9 H11 V10 H7Z"/></svg>
<div class="t" style="left:1270px;top:198px;font-size:12.5px;letter-spacing:-0.349px;">Form1.vb</div>
<svg style="left:1250px;top:217px" width="14" height="13" shape-rendering="crispEdges"><rect x="0" y="0" width="14" height="13" fill="#333"/><rect x="1" y="3" width="12" height="9" fill="#F5F5F5"/><path fill="#333" d="M2 6 H4 V7 H2Z M2 9 H4 V10 H2Z M6 5 H12 V8 H6Z M6 9 H12 V11 H6Z"/><path fill="#F5F5F5" d="M7 6 H11 V7 H7Z M7 9.9 H11 V10 H7Z"/></svg>
<div class="t" style="left:1270px;top:216px;font-size:12.5px;letter-spacing:-0.349px;">Form2.vb</div>
<svg style="left:1250px;top:235px" width="15" height="15" viewBox="0 0 15 15"><path d="M4.5 0.6 H10.6 L13.6 3.6 V11.4 H7" fill="#F5F5F5" stroke="#333" stroke-width="1.1"/><path d="M10.4 0.6 V3.8 H13.6" fill="none" stroke="#333" stroke-width="1"/><path d="M4.5 0.6 V8.4" stroke="#333" stroke-width="1.1"/><rect x="0.5" y="10.5" width="4.2" height="4" fill="#F5F5F5" stroke="#333" stroke-width="1"/><path d="M0.5 12.5 H4.7 M2.6 10.5 V14.5" stroke="#333" stroke-width="0.8"/></svg>
<div class="a" style="left:1270px;top:233px;width:70px;height:16px;overflow:hidden"><div class="t" style="left:0;top:0;font-size:12.5px;letter-spacing:-0.850px">LORD Theme.vb</div></div>
<svg style="left:1346px;top:166px" width="9" height="5" viewBox="0 0 9 5"><path d="M0 5 H9 L4.5 0 Z" fill="#868999"/></svg>
<div class="a" style="left:1346px;top:188px;width:9px;height:56px;background:#DDDEE7"></div>
<svg style="left:1346px;top:250px" width="9" height="5" viewBox="0 0 9 5"><path d="M0 0 H9 L4.5 5 Z" fill="#868999"/></svg>
<svg style="left:1207px;top:265px" width="5" height="9" viewBox="0 0 5 9"><path d="M5 0 V9 L0 4.5 Z" fill="#868999"/></svg>
<div class="a" style="left:1218px;top:265px;width:92px;height:9px;background:#DDDEE7"></div>
<svg style="left:1331px;top:265px" width="5" height="9" viewBox="0 0 5 9"><path d="M0 0 V9 L5 4.5 Z" fill="#868999"/></svg>
<div class="a" style="left:1342px;top:261px;width:17px;height:17px;background:#EEEEF2"></div>
<div class="a" style="left:1200px;top:278px;width:53px;height:20px;background:#F5F5F5;border:1px solid #CCCEDB;border-top:none;border-bottom:none"></div>
<div class="t" style="left:1206px;top:281px;font-size:12.5px;letter-spacing:-0.299px;color:#0E70C0;">Soluti...</div>
<div class="t" style="left:1258px;top:281px;font-size:12.5px;letter-spacing:-0.426px;">Team...</div>
<div class="t" style="left:1312px;top:281px;font-size:12.5px;letter-spacing:-0.834px;">Class...</div>
<div class="a" style="left:1200px;top:298px;width:160px;height:8px;background:#CCCEDB"></div>
<!-- properties -->
<div class="pn" style="left:1200px;top:305px;width:160px;height:379px;background:#EEEEF2"></div>
<div class="t" style="left:1205px;top:309px;font-size:12.5px;letter-spacing:-0.397px;">Properties</div>
<svg style="left:1266px;top:314px" width="37" height="5" shape-rendering="crispEdges"><defs><pattern id="g5" width="4" height="4" patternUnits="userSpaceOnUse"><rect x="0" y="0" width="1" height="1" fill="#999"/><rect x="2" y="2" width="1" height="1" fill="#999"/></pattern></defs><rect width="37" height="5" fill="url(#g5)"/></svg>
<svg style="left:1311px;top:314px" width="8" height="4" viewBox="0 0 8 4"><path d="M0 0 H8 L4.0 4 Z" fill="#1E1E1E"/></svg>
<svg style="left:1328px;top:311px" width="7" height="11" shape-rendering="crispEdges"><path fill="#1E1E1E" d="M1 0 H6 V6 H7 V7 H4 V11 H3 V7 H0 V6 H1 Z M2 1 V6 H4 V1 Z"/></svg>
<svg style="left:1343.2px;top:312px" width="9.6" height="8" viewBox="0 0 9.6 8"><path d="M0.6 0.4 L9.0 7.6 M9.0 0.4 L0.6 7.6" stroke="#1E1E1E" stroke-width="1.5"/></svg>
<div class="a" style="left:1201px;top:327px;width:158px;height:24px;background:#fff"></div>
<div class="t" style="left:1207px;top:331px;font-size:12.5px;letter-spacing:-0.405px;font-weight:bold;">LordLighttheme1</div>
<div class="a" style="left:1310px;top:331px;width:35px;height:16px;overflow:hidden"><div class="t" style="left:0;top:0;font-size:12.5px;letter-spacing:-.1px">Fun.LORDLighttheme</div></div>
<svg style="left:1349px;top:338px" width="6" height="3" viewBox="0 0 6 3"><path d="M0 0 H6 L3.0 3 Z" fill="#555"/></svg>
<svg style="left:1208px;top:357px" width="15" height="15" shape-rendering="crispEdges"><path fill="#333" d="M0 0 H5 V5 H0Z M0 9 H5 V14 H0Z"/><path fill="#F5F5F5" d="M2 1 H3 V4 H2Z M1 2 H4 V3 H1Z M2 10 H3 V13 H2Z M1 11 H4 V12 H1Z"/><path fill="#333" d="M6 0 H12 V1 H6Z M13 0 H14 V1 H13Z M6 2 H12 V3 H6Z M13 2 H14 V3 H13Z M6 4 H12 V5 H6Z M13 4 H14 V5 H13Z M6 6 H12 V7 H6Z M13 6 H14 V7 H13Z M6 11 H12 V12 H6Z M13 11 H14 V12 H13Z M6 13 H12 V14 H6Z M13 13 H14 V14 H13Z M12 8.5 H14 V9.5 H12Z"/></svg>
<div class="a" style="left:1227px;top:353px;width:23px;height:22px;border:1px solid #3399FF;background:#F1F2F7"></div>
<div class="a" style="left:1231px;top:357px;width:7px;height:7px;background:#333;color:#fff;font-size:7px;line-height:7.5px;text-align:center;font-weight:bold">A</div>
<div class="t" style="left:1231.5px;top:363px;font-size:8.5px;font-weight:bold;color:#222;line-height:11px;height:11px">Z</div>
<svg style="left:1239px;top:359px" width="7" height="11" viewBox="0 0 7 11"><path d="M3.4 0.6 V9" stroke="#00539C" stroke-width="2" fill="none"/><path d="M0.4 6 L3.4 9.6 L6.4 6" stroke="#00539C" stroke-width="1.8" fill="none"/></svg>
<div class="a" style="left:1253px;top:355px;width:1px;height:19px;background:#CCCEDB"></div>
<div class="a" style="left:1256px;top:353px;width:23px;height:22px;border:1px solid #3399FF;background:#F1F2F7"></div>
<svg style="left:1260px;top:357px" width="15" height="14" viewBox="0 0 15 14"><path d="M4.6 4.8 V0.6 H10.6 L13.8 3.8 V11.8 H5.6" fill="#F5F5F5" stroke="#333" stroke-width="1.2"/><path d="M10.4 0.6 V4 H13.8" fill="none" stroke="#333" stroke-width="1"/><path d="M2.2 8.4 V14" stroke="#333" stroke-width="2"/><path d="M0.6 5.4 V7 Q0.6 8.8 2.2 8.8 Q3.8 8.8 3.8 7 V5.4" fill="none" stroke="#333" stroke-width="1.4"/></svg>
<svg style="left:1285px;top:357px" width="11" height="14" viewBox="0 0 11 14"><path d="M5 0 H10.6 L6.8 5 H10 L1.6 14 L4.2 7.4 H0.8 Z" fill="#222"/></svg>
<div class="a" style="left:1305px;top:355px;width:1px;height:19px;background:#CCCEDB"></div>
<svg style="left:1313px;top:358px" width="13" height="12" viewBox="0 0 13 12"><path d="M1.9 10.6 L7 5.5" stroke="#B9B9BE" stroke-width="3.2" stroke-linecap="round"/><path d="M12.44 2.19 A3.8 3.8 0 1 1 10.6 0.36 L9.7 3.1 Z" fill="#B9B9BE"/></svg>
<div class="a" style="left:1216px;top:378px;width:126px;height:246px;background:#F5F5F5"></div>
<div class="a" style="left:1342px;top:378px;width:17px;height:246px;background:#F5F5F5"></div>
<div class="a" style="left:1220px;top:379px;width:56px;height:17px;overflow:hidden"><div class="t" style="left:0px;top:1px;font-size:12.5px;letter-spacing:-0.178px;">Movable</div></div>
<div class="a" style="left:1281px;top:379px;width:60px;height:17px;overflow:hidden"><div class="t" style="left:0px;top:1px;font-size:12.5px;letter-spacing:-0.099px;font-weight:bold;">True</div></div>
<div class="a" style="left:1216px;top:397px;width:126px;height:1px;background:#EEEEF2"></div>
<div class="a" style="left:1220px;top:398px;width:56px;height:17px;overflow:hidden"><div class="t" style="left:0px;top:1px;font-size:12.5px;letter-spacing:-0.261px;">NoRoundingInForm</div></div>
<div class="a" style="left:1281px;top:398px;width:60px;height:17px;overflow:hidden"><div class="t" style="left:0px;top:1px;font-size:12.5px;letter-spacing:-0.993px;font-weight:bold;">False</div></div>
<div class="a" style="left:1216px;top:416px;width:126px;height:1px;background:#EEEEF2"></div>
<div class="a" style="left:1220px;top:417px;width:56px;height:17px;overflow:hidden"><div class="t" style="left:0px;top:1px;font-size:12.5px;letter-spacing:-0.268px;">Padding</div></div>
<div class="a" style="left:1281px;top:417px;width:60px;height:17px;overflow:hidden"><div class="t" style="left:0px;top:1px;font-size:12.5px;letter-spacing:-0.564px;">0, 0, 0, 0</div></div>
<div class="a" style="left:1216px;top:435px;width:126px;height:1px;background:#EEEEF2"></div>
<div class="a" style="left:1220px;top:436px;width:56px;height:17px;overflow:hidden"><div class="t" style="left:0px;top:1px;font-size:12.5px;letter-spacing:-0.476px;">RightToLeft</div></div>
<div class="a" style="left:1281px;top:436px;width:60px;height:17px;overflow:hidden"><div class="t" style="left:0px;top:1px;font-size:12.5px;letter-spacing:0.010px;">No</div></div>
<div class="a" style="left:1216px;top:454px;width:126px;height:1px;background:#EEEEF2"></div>
<div class="a" style="left:1220px;top:455px;width:56px;height:17px;overflow:hidden"><div class="t" style="left:0px;top:1px;font-size:12.5px;letter-spacing:-0.571px;">Sizable</div></div>
<div class="a" style="left:1281px;top:455px;width:60px;height:17px;overflow:hidden"><div class="t" style="left:0px;top:1px;font-size:12.5px;letter-spacing:-0.099px;font-weight:bold;">True</div></div>
<div class="a" style="left:1216px;top:473px;width:126px;height:1px;background:#EEEEF2"></div>
<div class="a" style="left:1220px;top:474px;width:56px;height:17px;overflow:hidden"><div class="t" style="left:0px;top:1px;font-size:12.5px;letter-spacing:-0.829px;">Size</div></div>
<div class="a" style="left:1281px;top:474px;width:60px;height:17px;overflow:hidden"><div class="t" style="left:0px;top:1px;font-size:12.5px;letter-spacing:-0.082px;font-weight:bold;">803, 554</div></div>
<div class="a" style="left:1216px;top:492px;width:126px;height:1px;background:#EEEEF2"></div>
<div class="a" style="left:1220px;top:493px;width:56px;height:17px;overflow:hidden"><div class="t" style="left:0px;top:1px;font-size:12.5px;letter-spacing:-0.572px;">SmartBounds</div></div>
<div class="a" style="left:1281px;top:493px;width:60px;height:17px;overflow:hidden"><div class="t" style="left:0px;top:1px;font-size:12.5px;letter-spacing:-0.099px;font-weight:bold;">True</div></div>
<div class="a" style="left:1216px;top:511px;width:126px;height:1px;background:#EEEEF2"></div>
<div class="a" style="left:1220px;top:512px;width:56px;height:17px;overflow:hidden"><div class="t" style="left:0px;top:1px;font-size:12.5px;letter-spacing:-0.297px;">StartPosition</div></div>
<div class="a" style="left:1281px;top:512px;width:60px;height:17px;overflow:hidden"><div class="t" style="left:0px;top:1px;font-size:12.5px;letter-spacing:-0.596px;font-weight:bold;">WindowsDefaultLocation</div></div>
<div class="a" style="left:1216px;top:530px;width:126px;height:1px;background:#EEEEF2"></div>
<div class="a" style="left:1220px;top:531px;width:56px;height:17px;overflow:hidden"><div class="t" style="left:0px;top:1px;font-size:12.5px;letter-spacing:-0.342px;">TabIndex</div></div>
<div class="a" style="left:1281px;top:531px;width:60px;height:17px;overflow:hidden"><div class="t" style="left:0px;top:1px;font-size:12.5px;letter-spacing:0.048px;font-weight:bold;">0</div></div>
<div class="a" style="left:1216px;top:549px;width:126px;height:1px;background:#EEEEF2"></div>
<div class="a" style="left:1220px;top:550px;width:56px;height:17px;overflow:hidden"><div class="t" style="left:0px;top:1px;font-size:12.5px;letter-spacing:-0.124px;">TabStop</div></div>
<div class="a" style="left:1281px;top:550px;width:60px;height:17px;overflow:hidden"><div class="t" style="left:0px;top:1px;font-size:12.5px;letter-spacing:-0.060px;">True</div></div>
<div class="a" style="left:1216px;top:568px;width:126px;height:1px;background:#EEEEF2"></div>
<div class="a" style="left:1220px;top:569px;width:56px;height:17px;overflow:hidden"><div class="t" style="left:0px;top:1px;font-size:12.5px;letter-spacing:-0.385px;">Tag</div></div>
<div class="a" style="left:1216px;top:588px;width:61px;height:18px;background:#E9EAF0"></div>
<div class="a" style="left:1216px;top:587px;width:126px;height:1px;background:#EEEEF2"></div>
<div class="a" style="left:1220px;top:588px;width:56px;height:17px;overflow:hidden"><div class="t" style="left:0px;top:1px;font-size:12.5px;letter-spacing:-0.231px;">Text</div></div>
<div class="a" style="left:1281px;top:588px;width:60px;height:17px;overflow:hidden"><div class="t" style="left:0px;top:1px;font-size:12.5px;letter-spacing:-0.405px;font-weight:bold;">LordLighttheme1</div></div>
<div class="a" style="left:1216px;top:606px;width:126px;height:1px;background:#EEEEF2"></div>
<div class="a" style="left:1220px;top:607px;width:56px;height:14px;overflow:hidden"><div class="t" style="left:0px;top:1px;font-size:12.5px;letter-spacing:-0.690px;">TransparencyKey</div></div>
<div class="a" style="left:1277px;top:378px;width:1px;height:246px;background:#EEEEF2"></div>
<div class="a" style="left:1204px;top:421px;width:9px;height:9px;border:1px solid #333;background:#fff"></div>
<svg style="left:1204px;top:421px" width="9" height="9" viewBox="0 0 9 9"><path d="M2 4.5 H7 M4.5 2 V7" stroke="#111" stroke-width="1"/></svg>
<div class="a" style="left:1204px;top:478px;width:9px;height:9px;border:1px solid #333;background:#fff"></div>
<svg style="left:1204px;top:478px" width="9" height="9" viewBox="0 0 9 9"><path d="M2 4.5 H7 M4.5 2 V7" stroke="#111" stroke-width="1"/></svg>
<div class="a" style="left:1279px;top:608px;width:21px;height:12px;background:#FF00FF;border:1px solid #111;border-bottom:none"></div>
<div class="a" style="left:1307px;top:607px;width:34px;height:13px;overflow:hidden"><div class="t" style="left:0px;top:1px;font-size:12.5px;letter-spacing:-0.891px;font-weight:bold;">Fuchsia</div></div>
<svg style="left:1345.5px;top:384px" width="9" height="5" viewBox="0 0 9 5"><path d="M0 5 H9 L4.5 0 Z" fill="#868999"/></svg>
<div class="a" style="left:1346px;top:532px;width:9px;height:54px;background:#DDDEE7"></div>
<svg style="left:1345.5px;top:609px" width="9" height="5" viewBox="0 0 9 5"><path d="M0 0 H9 L4.5 5 Z" fill="#868999"/></svg>
<div class="a" style="left:1201px;top:620px;width:158px;height:63px;background:#F5F5F5"></div>
<div class="t" style="left:1207px;top:627px;font-size:12.5px;letter-spacing:-0.194px;font-weight:bold;">Text</div>
<div class="t" style="left:1207px;top:645px;font-size:12.5px;letter-spacing:-0.337px;">The text associated with</div>
<div class="t" style="left:1207px;top:660px;font-size:12.5px;letter-spacing:-0.070px;">the control.</div>
<!-- bottom -->
<div class="t" style="left:6px;top:690px;font-size:12.5px;letter-spacing:-0.570px;">Error List</div>
<div class="t" style="left:65px;top:690px;font-size:12.5px;letter-spacing:-0.087px;">Output</div>
<div class="a" style="left:6px;top:709px;width:46px;height:6px;background:#CCCEDB"></div>
<div class="a" style="left:64px;top:709px;width:38px;height:6px;background:#CCCEDB"></div>
<div class="a" style="left:0;top:715px;width:1366px;height:1px;background:#007ACC"></div>
</body></html>
